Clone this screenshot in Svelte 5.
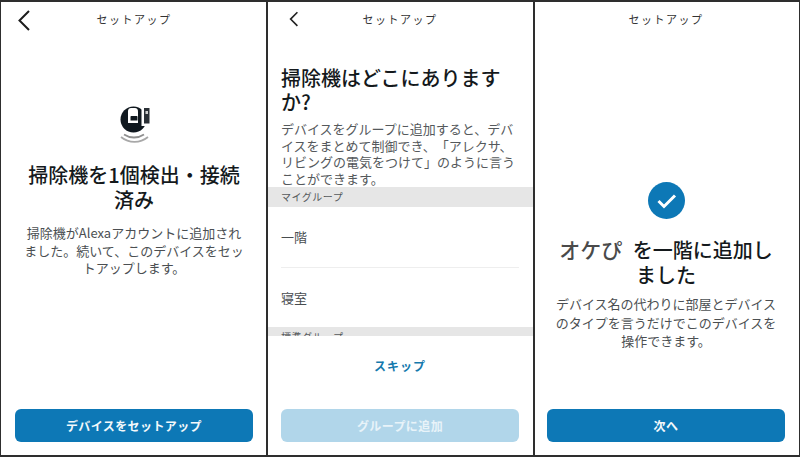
<script>
  const rooms = ['一階', '寝室'];
</script>

<div class="shot">
  <section class="panel first">
    <header class="bar">
      <svg class="back" viewBox="0 0 14 21" width="14" height="21"><path d="M12 1 2.500 10.500 12 20" fill="none" stroke="#1c1c1c" stroke-width="2"/></svg>
      <span>セットアップ</span>
    </header>
    <div class="center c1">
      <svg class="vac" viewBox="0 0 31 38" width="31" height="38">
        <circle cx="13.500" cy="13.500" r="13" fill="#10181f"/>
        <path d="M8 17V5c0-2 1.500-3 3-3h4c2 0 3 1.500 3 3.500V17Z" fill="#fff"/>
        <path d="M10.500 11c0-.6.4-1 1-1h5c.6 0 1 .4 1 1v3.500h-7Z" fill="#10181f"/>
        <rect x="21.500" y="0" width="9.500" height="20" fill="#fff"/>
        <rect x="24" y="2" width="5.500" height="15.500" fill="#2a3036"/>
        <rect x="25.500" y="5" width="2.500" height="3" fill="#cfcfcf"/>
        <path d="M4 28.500c6 4 14 4 20 0" fill="none" stroke="#8f8f8f" stroke-width="1.800"/>
        <path d="M1 31c8 6.500 19 6.500 27 0" fill="none" stroke="#a8a8a8" stroke-width="1.800"/>
      </svg>
      <h1 class="t1">掃除機を1個検出・接続<br />済み</h1>
      <p class="b1">掃除機がAlexaアカウントに追加され<br />ました。続いて、このデバイスをセッ<br />トアップします。</p>
    </div>
    <button class="btn">デバイスをセットアップ</button>
  </section>

  <section class="panel second">
    <header class="bar">
      <svg class="back small" viewBox="0 0 14 20" width="12" height="17"><path d="M11 1.500 3 9.500l8 8" fill="none" stroke="#222" stroke-width="1.900"/></svg>
      <span>セットアップ</span>
    </header>
    <div class="intro">
      <h2>掃除機はどこにあります<br />か?</h2>
      <p>デバイスをグループに追加すると、デバ<br />イスをまとめて制御でき、「アレクサ、<br />リビングの電気をつけて」のように言う<br />ことができます。</p>
    </div>
    <div class="list">
      <div class="group">マイグループ</div>
      {#each rooms as room, i}
        <div class="room" class:line={i === 0}>{room}</div>
      {/each}
      <div class="group cut"><span>標準グループ</span></div>
    </div>
    <div class="skip">スキップ</div>
    <button class="btn off">グループに追加</button>
  </section>

  <section class="panel third">
    <header class="bar"><span>セットアップ</span></header>
    <div class="center c3">
      <svg class="ok" viewBox="0 0 37 37" width="37" height="37">
        <circle cx="18.500" cy="18.500" r="18.500" fill="#0d78b6"/>
        <path d="M10.500 19l5.500 5.500 11-11" fill="none" stroke="#fff" stroke-width="3"/>
      </svg>
      <h1 class="t3"><span class="name">オケぴ</span> を一階に追加し<br />ました</h1>
      <p class="b3">デバイス名の代わりに部屋とデバイス<br />のタイプを言うだけでこのデバイスを<br />操作できます。</p>
    </div>
    <button class="btn">次へ</button>
  </section>
</div>

<style>
  :global(body) { margin: 0; }
  .shot {
    width: 800px;
    height: 457px;
    box-sizing: border-box;
    padding: 2px 1px 2px 1px;
    background: #2e2e2e;
    display: grid;
    grid-template-columns: 265px 265px 264px;
    gap: 2px;
    overflow: hidden;
    font-family: "Noto Sans CJK JP", "Noto Sans", sans-serif;
    color: #1a2024;
    text-spacing-trim: space-all;
  }
  .panel {
    min-width: 0;
    background: #fff;
    display: flex;
    flex-direction: column;
    padding-bottom: 13px;
    box-sizing: border-box;
  }
  .first { padding-left: 14px; padding-right: 13px; }
  .second { padding-left: 13px; padding-right: 14px; }
  .third { padding-left: 12px; padding-right: 14px; }
  .bar {
    position: relative;
    height: 34px;
    flex: none;
    display: flex;
    align-items: center;
    justify-content: center;
    font-size: 11px;
    letter-spacing: 1.500px;
    color: #333;
  }
  .back { position: absolute; left: 2px; top: 8px; }
  .back.small { left: 7px; top: 9px; }
  .center {
    flex: 1;
    display: flex;
    flex-direction: column;
    align-items: center;
    text-align: center;
  }
  .c1 { padding-top: 70px; }
  .c3 { padding-top: 146px; }
  .vac { margin-left: 3px; }
  h1 {
    margin: 0 -8px;
    font-size: 20px;
    line-height: 25px;
    font-weight: 500;
    color: #14191c;
    white-space: nowrap;
  }
  .t1 { margin-top: 18px; }
  .b1 {
    margin: 12px -8px 0;
    font-size: 13px;
    line-height: 17.500px;
    color: #4b4f52;
    white-space: nowrap;
  }
  .t3 { margin-top: 18px; line-height: 25px; }
  .name { color: #4a4a4a; font-size: 21px; margin-right: 6px; }
  .b3 {
    margin: 8px -8px 0;
    font-size: 13px;
    line-height: 18.500px;
    color: #4b4f52;
    white-space: nowrap;
  }
  .intro { padding-top: 30px; flex: none; }
  h2 {
    margin: 0;
    font-size: 20px;
    line-height: 24px;
    font-weight: 500;
    color: #14191c;
    white-space: nowrap;
  }
  .intro p {
    margin: 7px 0 0;
    font-size: 13px;
    line-height: 16.500px;
    color: #55595c;
    white-space: nowrap;
  }
  .list {
    height: 149px;
    margin: 0 -14px 0 -13px;
    flex: none;
    overflow: hidden;
  }
  .group {
    height: 20px;
    background: #e6e6e6;
    padding: 0 13px;
    font-size: 10px;
    line-height: 20px;
    letter-spacing: .5px;
    color: #55595c;
    overflow: hidden;
  }
  .group.cut { height: 9px; }
  .group.cut span { display: block; line-height: 20px; }
  .room {
    height: 59px;
    margin: 0 14px 0 13px;
    font-size: 13px;
    line-height: 59px;
    color: #484c4f;
    box-sizing: border-box;
  }
  .room.line { height: 61px; border-bottom: 1px solid #eee; }
  .skip {
    height: 60px;
    flex: none;
    text-align: center;
    font-size: 12px;
    font-weight: 700;
    letter-spacing: 1px;
    line-height: 60px;
    color: #1579ad;
  }
  .btn {
    flex: none;
    margin-top: auto;
    height: 33px;
    border: 0;
    border-radius: 6px;
    background: #0d78b6;
    color: #f3f8fb;
    font-family: inherit;
    font-size: 12px;
    font-weight: 700;
    letter-spacing: .4px;
    padding: 0;
  }
  .btn.off { background: #b1d6ea; color: #e8f3f9; }
</style>
